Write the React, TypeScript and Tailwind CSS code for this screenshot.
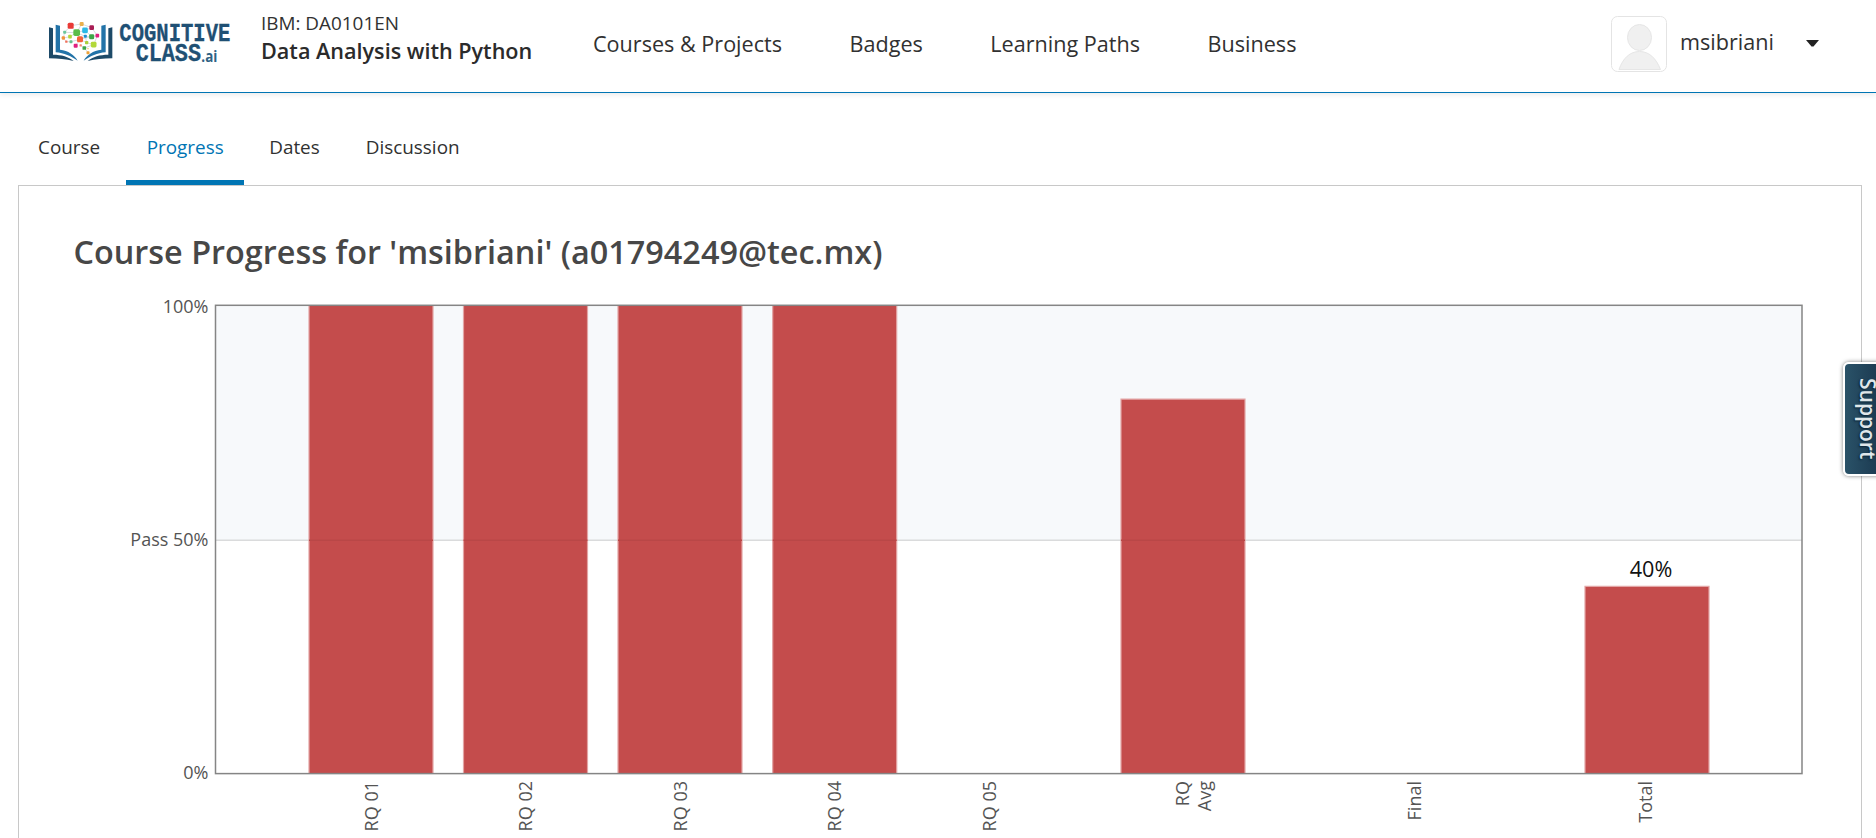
const dots: [number, number, number, string][] = [
  [122, 77, 18, "#e93a36"], [155, 72, 12, "#e9b04d"], [185, 83, 14, "#a81d54"], [165, 91, 17, "#2cb9e6"],
  [140, 98, 20, "#5bbd4a"], [202, 107, 11, "#e0207f"], [185, 110, 15, "#3fa648"], [104, 97, 9, "#6cc79c"],
  [100, 114, 10, "#f0953f"], [120, 110, 11, "#b4d63c"], [166, 109, 9, "#1f8fd1"], [150, 118, 18, "#f4633a"],
  [123, 125, 9, "#64c08d"], [109, 125, 7, "#f2705a"], [170, 128, 10, "#a9d13b"], [191, 134, 17, "#b2d83b"],
  [137, 137, 12, "#e0207f"], [152, 136, 7, "#f28a72"], [163, 144, 11, "#3fa648"], [174, 158, 9, "#eda23a"],
  [174, 146, 4, "#f0c85a"],
];

const links =
  "M104 97 122 77 155 72 185 83 202 107 191 134 163 144 174 158M104 97 140 98 165 91 185 110 150 118 137 137M100 114 120 110 140 98 155 72M100 114 109 125 123 125 150 118 170 128 191 134M122 77 140 98 166 109 185 110 202 107M165 91 185 83M104 97 100 114M152 136 163 144M150 118 166 109 170 128";

function Logo() {
  return (
    <svg width="220" height="65" viewBox="0 0 660 195" className="shrink-0">
      <g>
        <path d="M57 82 69 85V164C95 164 115 170 131 183 108 178 85 176 57 175Z" fill="#1d4a68" />
        <path d="M77 74 90 77V149C115 152 133 164 143 182 122 168 103 159 77 157Z" fill="#2273a8" />
      </g>
      <g>
        <path d="M247 82 235 85V164C209 164 189 170 173 183 196 178 219 176 247 175Z" fill="#1d4a68" />
        <path d="M227 74 214 77V149C189 152 171 164 161 182 182 168 201 159 227 157Z" fill="#2273a8" />
      </g>
      <path d={links} fill="none" stroke="#c3cad0" strokeWidth="2" />
      {dots.map(([x, y, s, c], i) => (
        <rect key={i} x={x - s / 2} y={y - s / 2} width={s} height={s} rx={s / 4} fill={c} />
      ))}
      <g fill="#1f5074" stroke="#1f5074" strokeWidth="1" fontFamily='"Liberation Mono", monospace' fontWeight="700" fontSize="79">
        <text x="268" y="123" textLength="333" lengthAdjust="spacingAndGlyphs">COGNITIVE</text>
        <text x="317" y="184" textLength="196" lengthAdjust="spacingAndGlyphs">CLASS</text>
      </g>
      <text x="514" y="185" fill="#2f6285" fontFamily='"Open Sans", sans-serif' fontWeight="700" fontSize="46" textLength="48" lengthAdjust="spacingAndGlyphs">.ai</text>
    </svg>
  );
}

function Avatar() {
  return (
    <svg width="56" height="56" viewBox="0 0 56 56" className="shrink-0">
      <rect x="0.5" y="0.5" width="55" height="55" rx="6" fill="#fff" stroke="#e4e4e4" />
      <g fill="#f0f0f0" stroke="#e6e6e6">
        <path d="M8 53.5C12 42 19 35.500 28.500 35.500S45 42 49.500 53.500Z" />
        <ellipse cx="28.500" cy="21.500" rx="12" ry="13" />
      </g>
    </svg>
  );
}

const bars = [
  { x: 309, value: 100 }, { x: 463.500, value: 100 }, { x: 618, value: 100 }, { x: 772.700, value: 100 },
  { x: 1121, value: 80 }, { x: 1585, value: 40 },
];

const ticks: [string, number][] = [
  ["RQ 01", 378], ["RQ 02", 532], ["RQ 03", 687], ["RQ 04", 841], ["RQ 05", 996],
  ["RQ", 1189], ["Avg", 1211], ["Final", 1421], ["Total", 1652],
];

function Chart() {
  return (
    <svg width="1842" height="553" viewBox="19 285 1842 553" className="block" fontFamily='"Open Sans", sans-serif'>
      <rect x="216" y="306" width="1586" height="234" fill="#f7f9fb" />
      <path d="M216 540.300H1802" stroke="#dadbdc" strokeWidth="1.500" />
      {bars.map(({ x, value }) => {
        const h = value * 4.68;
        return (
          <g key={x}>
            <rect x={x} y={773.5 - h} width="124" height={h} fill="#c44c4c" />
            <path d={`M${x} 773.5V${773.5 - h}h124V773.5`} fill="none" stroke="#e3a5a5" strokeWidth="1.200" />
            {value > 50 && <path d={`M${x} 540.300h124`} stroke="#b94747" strokeWidth="1.500" />}
          </g>
        );
      })}
      <rect x="215.500" y="305.300" width="1586.500" height="468.300" fill="none" stroke="#858585" strokeWidth="1.500" />
      <g fill="#545454" fontSize="18" textAnchor="end">
        <text x="208.500" y="312.500">100%</text>
        <text x="208.500" y="546">Pass 50%</text>
        <text x="208.500" y="779">0%</text>
        {ticks.map(([label, x]) => (
          <text key={label} transform={`translate(${x} 781) rotate(-90)`}>{label}</text>
        ))}
      </g>
      <text x="1651" y="577" fontSize="21.600" fill="#111" textAnchor="middle">40%</text>
    </svg>
  );
}

export default function App() {
  return (
    <div className="relative h-[838px] w-full overflow-hidden bg-white font-['Open_Sans',sans-serif] text-[#313131]">
      <header className="flex h-[93px] items-start border-b border-[#0075b4] pl-[30px] shadow-[0_2px_5px_rgba(0,0,0,0.08)]">
        <Logo />
        <div className="ml-[11px] w-[332px] pt-[9px] whitespace-nowrap">
          <div className="text-[18.9px] leading-[28px]">IBM: DA0101EN</div>
          <div className="text-[21.6px] leading-[28px] font-semibold text-[#2b2b2b]">Data Analysis with Python</div>
        </div>
        <nav className="flex h-[88px] items-center gap-[67.500px] text-[21.6px] whitespace-nowrap">
          <a>Courses &amp; Projects</a>
          <a>Badges</a>
          <a>Learning Paths</a>
          <a>Business</a>
        </nav>
        <div className="mt-4 mr-[57px] ml-auto flex h-[56px] items-center">
          <Avatar />
          <span className="-mt-1 ml-[13px] text-[21.6px] leading-[28px]">msibriani</span>
          <svg width="13" height="7" viewBox="0 0 13 7" className="-mt-0.5 ml-[32px]"><path d="M0 0h13L7.500 6.500h-2Z" fill="#222" /></svg>
        </div>
      </header>

      <nav className="flex h-[92px] items-end pl-[14px] text-[18.9px]">
        <a className="h-[60px] px-6 leading-[44px]">Course</a>
        <a className="ml-[2px] h-[60px] w-[118px] border-b-[5px] border-[#0075b4] text-center leading-[44px] text-[#0075b4]">Progress</a>
        <a className="h-[60px] px-[25px] leading-[44px]">Dates</a>
        <a className="h-[60px] px-[21px] leading-[44px]">Discussion</a>
      </nav>

      <main className="ml-[18px] w-[1844px] border border-b-0 border-[#c8c8c8]">
        <h1 className="h-[99px] pl-[54.500px] text-[32.4px] leading-[131px] font-semibold whitespace-nowrap text-[#474747]">
          Course Progress for &#39;msibriani&#39; (a01794249@tec.mx)
        </h1>
        <Chart />
      </main>

      <button className="absolute top-[362px] -right-2 flex h-[114px] w-[41px] items-center justify-center rounded-l-[6px] border-2 border-white bg-linear-to-r from-[#2a5268] to-[#1a384f] shadow-[0_0_4px_rgba(0,0,0,0.5)]">
        <span className="ml-[8px] text-[21px] font-semibold text-[#dfe6ea] [text-shadow:1px_1px_2px_#0b2233] [writing-mode:vertical-rl]">Support</span>
      </button>
    </div>
  );
}
